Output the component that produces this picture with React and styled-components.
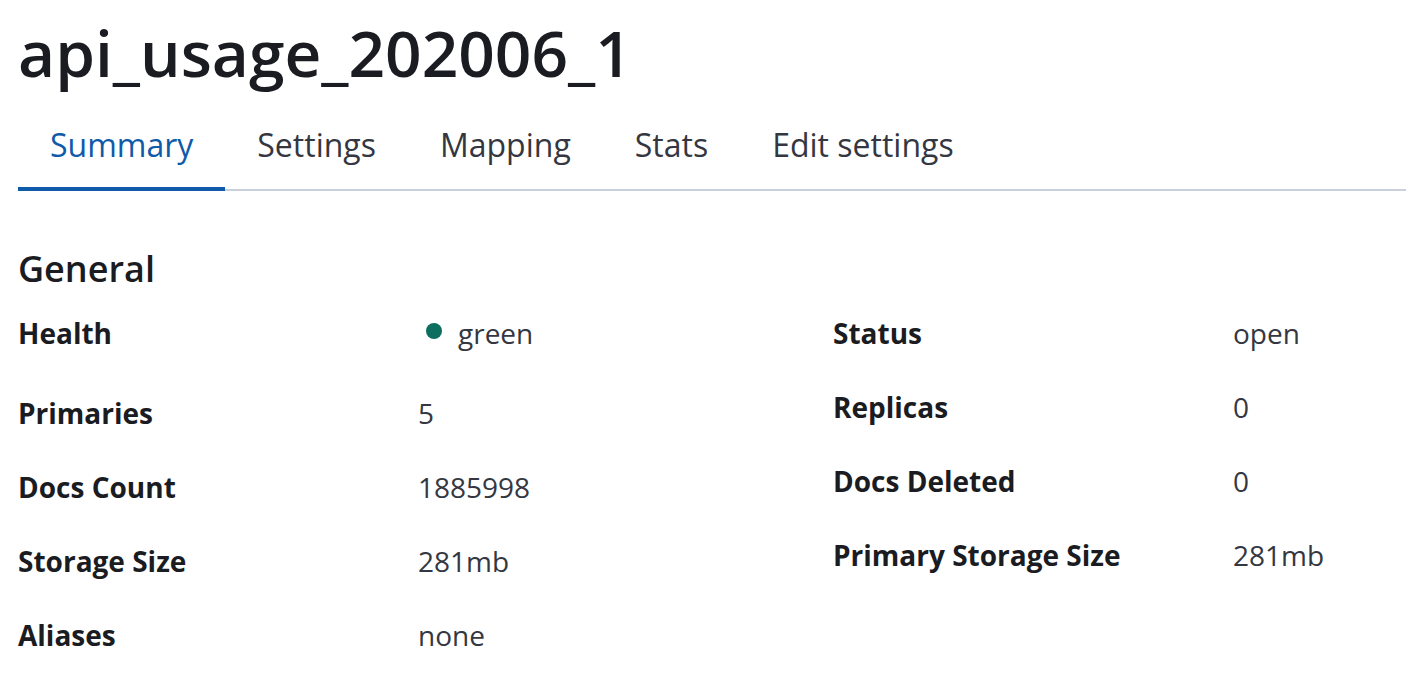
import React from "react";
import styled, { createGlobalStyle } from "styled-components";

const GlobalStyle = createGlobalStyle`
  body {
    margin: 0;
    background: #ffffff;
    font-family: "Open Sans", "Noto Sans", sans-serif;
    color: #1a1c21;
  }
`;

const Page = styled.div`
  padding: 15px 0 0 18px;
`;

const Title = styled.h1`
  margin: 0;
  font-size: 64px;
  line-height: 76px;
  font-weight: 600;
  color: #1a1c21;
`;

const TabList = styled.div`
  display: flex;
  padding-top: 30px;
  box-shadow: inset 0 -2px 0 #c9d1de;
`;

const Tab = styled.button`
  border: none;
  background: none;
  font-family: inherit;
  font-size: 32px;
  line-height: 48px;
  padding: 0 32px 18px;
  border-bottom: 4px solid ${(p) => (p.$active ? "#0f5aa9" : "transparent")};
  color: ${(p) => (p.$active ? "#0f5aa9" : "#343741")};
  cursor: pointer;
`;

const SectionTitle = styled.h2`
  margin: 54px 0 0;
  font-size: 36px;
  line-height: 48px;
  font-weight: 600;
  color: #1a1c21;
`;

const Columns = styled.div`
  display: grid;
  grid-template-columns: 815px 1fr;
  align-items: start;
  margin-top: 20px;
`;

const DescList = styled.dl`
  display: grid;
  grid-template-columns: 400px 1fr;
  row-gap: 34px;
  margin: 0;
  align-items: start;
  align-content: start;
`;

const Term = styled.dt`
  font-size: 28px;
  line-height: 40px;
  font-weight: 700;
  color: #1a1c21;
`;

const Detail = styled.dd`
  margin: 0;
  font-size: 28px;
  line-height: 40px;
  color: #343741;
`;

const Health = styled.div`
  display: flex;
  align-items: flex-start;
  gap: 8px;
  padding-bottom: 6px;
`;

const Dot = styled.svg`
  width: 32px;
  height: 32px;
  margin-top: 2px;
  flex-shrink: 0;
`;

const tabs = ["Summary", "Settings", "Mapping", "Stats", "Edit settings"];

const left = [
  ["Health", "green"],
  ["Primaries", "5"],
  ["Docs Count", "1885998"],
  ["Storage Size", "281mb"],
  ["Aliases", "none"],
];

const right = [
  ["Status", "open"],
  ["Replicas", "0"],
  ["Docs Deleted", "0"],
  ["Primary Storage Size", "281mb"],
];

const renderValue = (label, value) => {
  if (label === "Health") {
    return (
      <Health>
        <Dot viewBox="0 0 32 32">
          <circle cx="16" cy="16" r="8" fill="#0b6e5f" />
        </Dot>
        <span>{value}</span>
      </Health>
    );
  }
  return value;
};

const List = ({ rows }) => (
  <DescList>
    {rows.map(([label, value]) => (
      <React.Fragment key={label}>
        <Term>{label}</Term>
        <Detail>{renderValue(label, value)}</Detail>
      </React.Fragment>
    ))}
  </DescList>
);

export default function App() {
  return (
    <Page>
      <GlobalStyle />
      <Title>api_usage_202006_1</Title>
      <TabList>
        {tabs.map((t, i) => (
          <Tab key={t} $active={i === 0}>
            {t}
          </Tab>
        ))}
      </TabList>
      <SectionTitle>General</SectionTitle>
      <Columns>
        <List rows={left} />
        <List rows={right} />
      </Columns>
    </Page>
  );
}
